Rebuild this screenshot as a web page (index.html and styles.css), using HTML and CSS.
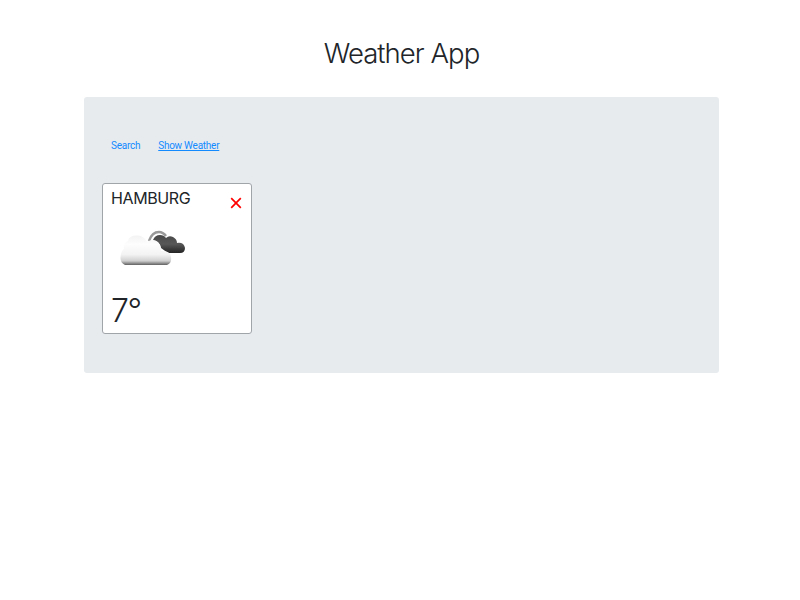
FILE: index.html
```html
<!DOCTYPE html>
<html lang="en">
<head>
<meta charset="utf-8">
<title>Weather App</title>
<link rel="stylesheet" href="styles.css">
</head>
<body>
<main class="container">
  <h1 class="title"><span>Weather App</span></h1>
  <section class="panel">
    <nav class="nav">
      <a class="nav-link">Search</a>
      <a class="nav-link active">Show Weather</a>
    </nav>
    <article class="card">
      <header class="card-head">
        <h2 class="city">HAMBURG</h2>
        <svg class="close" viewBox="0 0 12 12"><path d="M1.2 1.2 10.8 10.8M10.8 1.2 1.2 10.8"/></svg>
      </header>
      <svg class="icon" viewBox="0 0 90 55">
        <defs>
          <linearGradient id="light" x1="0" y1="0" x2="0" y2="1">
            <stop offset="0" stop-color="#f3f3f3"/><stop offset=".3" stop-color="#fdfdfd"/>
            <stop offset=".65" stop-color="#f3f3f3"/><stop offset=".86" stop-color="#d0d0d0"/><stop offset="1" stop-color="#606060"/>
          </linearGradient>
          <linearGradient id="dark" x1="0" y1="0" x2="0" y2="1">
            <stop offset="0" stop-color="#484848"/><stop offset=".5" stop-color="#585858"/><stop offset="1" stop-color="#242424"/>
          </linearGradient>
          <filter id="soft" filterUnits="userSpaceOnUse" x="0" y="0" width="90" height="55"><feGaussianBlur stdDeviation=".75"/></filter>
        </defs>
        <g filter="url(#soft)">
          <path d="M39 21Q42 12 49 12Q53 12 56 16" fill="none" stroke="#999" stroke-width="2.500"/>
          <path d="M43 20Q45 15 50 15Q54 15 56 18Q59 15 63 17Q67 19 67 23Q74 22 75 28Q75 33 70 33H58L51 28Q50 22 43 20Z" fill="url(#dark)"/>
          <path d="M15 45Q10 43 10.500 37Q11 31 14 29Q13 23 18 21Q19 15 28 15.500Q34 16 37 22Q43 18 48 22Q52 26 51 31Q60 30 61 37Q62 43 57 45Z" fill="url(#light)"/>
        </g>
      </svg>
      <p class="temp">7°</p>
    </article>
  </section>
</main>
</body>
</html>
```
FILE: styles.css
```css
* { box-sizing: border-box; }
body {
  margin: 0;
  background: #fff;
  color: #212529;
  font-family: Inter, "Liberation Sans", sans-serif;
}
.container { width: 635px; margin-left: 84px; padding-top: 36px; }
.title {
  margin: 0 0 27px;
  font-size: 27.5px;
  font-weight: 300;
  line-height: 34px;
  letter-spacing: -0.95px;
  text-align: center;
}
.panel {
  height: 276px;
  padding: 39px 18px;
  background: #e7ebee;
  border-radius: 3px;
}
.nav { display: flex; gap: 18px; padding: 0 9px; height: 47px; }
.nav-link { color: #148aff; font-family: Roboto, sans-serif; font-size: 10px; line-height: 19px; letter-spacing: -0.25px; }
.active { text-decoration: underline; }
.card {
  width: 150px;
  height: 151px;
  padding: 4px 9px 5px 8px;
  background: #fff;
  border: 1px solid #a0a5aa;
  border-radius: 3px;
}
.card-head { display: flex; justify-content: space-between; height: 32px; }
.city { margin: 0; font-size: 16px; font-weight: 400; line-height: 20px; letter-spacing: -0.4px; }
.close { width: 12px; height: 12px; margin-top: 9px; }
.close path { fill: none; stroke: #f00; stroke-width: 1.700; }
.icon { display: block; width: 90px; height: 55px; margin-left: -1px; }
.temp { margin: 16px 0 0; font-size: 32px; font-weight: 300; line-height: 40px; letter-spacing: -1.3px; }
```
